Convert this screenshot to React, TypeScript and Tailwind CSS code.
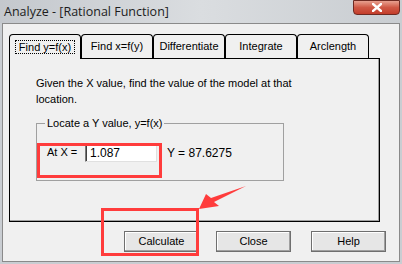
import React from "react";

const tabs = ["Find y=f(x)", "Find x=f(y)", "Differentiate", "Integrate", "Arclength"];

function Tab({ label, active }: { label: string; active?: boolean }) {
  return (
    <div
      className={`w-[72px] h-[24px] flex items-center justify-center border-t border-l border-r border-black rounded-t-[4px] bg-[#f0f0f0] ${
        active ? "relative z-10 h-[25px] -mb-px" : ""
      }`}
    >
      <span className={active ? "border border-dotted border-black px-[3px] leading-[10px] py-[1px]" : ""}>
        {label}
      </span>
    </div>
  );
}

function Btn({ label }: { label: string }) {
  return (
    <button className="w-[75px] h-[21px] bg-[#e6e6e6] border border-[#6f6f6f] shadow-[inset_-1px_-1px_0_#a0a0a0,inset_1px_1px_0_#ffffff] text-[11px] text-black">
      {label}
    </button>
  );
}

export default function App() {
  return (
    <div
      className="w-[402px] h-[264px] relative overflow-hidden bg-[#c9cdd2] text-black"
      style={{ fontFamily: '"Liberation Sans", Arial, sans-serif' }}
    >
      {/* title bar */}
      <div className="h-[23px] flex items-start justify-between bg-gradient-to-r from-[#c4c8cd] via-[#dadde0] to-[#c9cdd1]">
        <span
          className="pl-[4px] pt-[3px] text-[12.5px] text-[#1c1c1c]"
          style={{ fontFamily: '"Open Sans", "Noto Sans", sans-serif' }}
        >
          Analyze - [Rational Function]
        </span>
        <div className="mr-[2px] w-[47px] h-[15px] rounded-b-[4px] border border-[#6e2a22] bg-gradient-to-b from-[#e7a090] via-[#cf5845] to-[#c33d2a] flex items-center justify-center">
          <svg width="10" height="9" viewBox="0 0 10 9">
            <path d="M1 1 L9 8 M9 1 L1 8" stroke="#ffffff" strokeWidth="2.4" strokeLinecap="square" />
          </svg>
        </div>
      </div>

      {/* client area */}
      <div className="mx-[2px] h-[239px] border border-[#8a8a8a] bg-[#f0f0f0] text-[11px] px-[6px] pt-[10px]">
        <div className="flex">
          {tabs.map((t, i) => (
            <Tab key={t} label={t} active={i === 0} />
          ))}
        </div>
        <div className="w-[371px] h-[164px] border border-black shadow-[inset_-1px_-1px_0_#a0a0a0] pt-[16px] pl-[26px]">
          <p className="leading-[16px] w-[270px]">Given the X value, find the value of the model at that location.</p>
          <fieldset className="mt-[8px] w-[248px] h-[66px] border border-[#a0a0a0] px-[10px]">
            <legend className="px-[2px] ml-[-2px]">Locate a Y value, y=f(x)</legend>
            <div className="flex items-center mt-[12px]">
              <span className="w-[38px]">At X =</span>
              <div className="w-[72px] h-[18px] border border-[#7a7a7a] border-r-[#e0e0e0] border-b-[#e0e0e0] bg-white shadow-[inset_1px_1px_0_#404040] flex items-center pl-[4px] text-[12px]">
                1.087
              </div>
              <span className="ml-[10px] text-[12px]">Y = 87.6275</span>
            </div>
          </fieldset>
        </div>
        <div className="flex mt-[9px] pl-[115px]">
          <Btn label="Calculate" />
          <div className="ml-[17px]">
            <Btn label="Close" />
          </div>
          <div className="ml-[20px]">
            <Btn label="Help" />
          </div>
        </div>
      </div>

      {/* annotations */}
      <div className="absolute left-[37px] top-[143px] w-[125px] h-[35px] border-[3px] border-[#ff3c3c]" />
      <div className="absolute left-[101px] top-[208px] w-[98px] h-[48px] border-[3px] border-[#ff3c3c]" />
      <svg className="absolute left-0 top-0" width="402" height="264" viewBox="0 0 402 264">
        <polygon points="199,209 206,194 211,198 246,186 214,202 219,206" fill="#ff3c3c" />
      </svg>
    </div>
  );
}
